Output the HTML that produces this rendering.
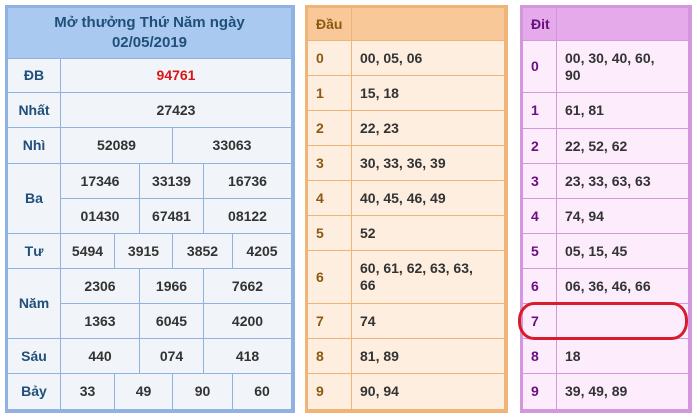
<!DOCTYPE html><html><head><meta charset="utf-8"><style>
body{margin:0;width:698px;height:419px;background:#fff;position:relative;overflow:hidden;font-family:"Liberation Sans",Arial,sans-serif;font-weight:bold;font-size:14px;color:#333}
.c{position:absolute;box-sizing:border-box;display:flex;align-items:center;justify-content:center;text-align:center;line-height:17px}
.b{border-right:1px solid #8fb2e2;border-bottom:1px solid #8fb2e2;background:#f1f4f9}
.bl{color:#1f4f7a}
.o{border-right:1px solid #f0b478;border-bottom:1px solid #f0b478;background:#fdeee0;justify-content:flex-start;padding-left:8px;text-align:left}
.ol{color:#8a5a10}
.p{border-right:1px solid #d496dc;border-bottom:1px solid #d496dc;background:#fcecfc;justify-content:flex-start;padding-left:8px;text-align:left}
.pl{color:#6a1080}
.frame{position:absolute;box-sizing:border-box}
</style></head><body>
<div class="frame" style="left:5px;top:5px;width:290px;height:408px;border:3px solid #8fb2e2"></div>
<div class="c b bl" style="left:8px;top:8px;width:284px;height:51px;background:#aac9f0;color:#1f4f7a;font-size:15px;line-height:20px">Mở thưởng Thứ Năm ngày<br>02/05/2019</div>
<div class="c b bl" style="left:8px;top:59px;width:53px;height:34px">ĐB</div>
<div class="c b" style="left:61px;top:59px;width:231px;height:34px;color:#d81818">94761</div>
<div class="c b bl" style="left:8px;top:93px;width:53px;height:35px">Nhất</div>
<div class="c b" style="left:61px;top:93px;width:231px;height:35px">27423</div>
<div class="c b bl" style="left:8px;top:128px;width:53px;height:36px">Nhì</div>
<div class="c b" style="left:61px;top:128px;width:112px;height:36px">52089</div>
<div class="c b" style="left:173px;top:128px;width:119px;height:36px">33063</div>
<div class="c b bl" style="left:8px;top:164px;width:53px;height:70px">Ba</div>
<div class="c b" style="left:61px;top:164px;width:79px;height:35px">17346</div>
<div class="c b" style="left:140px;top:164px;width:64px;height:35px">33139</div>
<div class="c b" style="left:204px;top:164px;width:88px;height:35px">16736</div>
<div class="c b" style="left:61px;top:199px;width:79px;height:35px">01430</div>
<div class="c b" style="left:140px;top:199px;width:64px;height:35px">67481</div>
<div class="c b" style="left:204px;top:199px;width:88px;height:35px">08122</div>
<div class="c b bl" style="left:8px;top:234px;width:53px;height:35px">Tư</div>
<div class="c b" style="left:61px;top:234px;width:54px;height:35px">5494</div>
<div class="c b" style="left:115px;top:234px;width:58px;height:35px">3915</div>
<div class="c b" style="left:173px;top:234px;width:60px;height:35px">3852</div>
<div class="c b" style="left:233px;top:234px;width:59px;height:35px">4205</div>
<div class="c b bl" style="left:8px;top:269px;width:53px;height:70px">Năm</div>
<div class="c b" style="left:61px;top:269px;width:79px;height:35px">2306</div>
<div class="c b" style="left:140px;top:269px;width:64px;height:35px">1966</div>
<div class="c b" style="left:204px;top:269px;width:88px;height:35px">7662</div>
<div class="c b" style="left:61px;top:304px;width:79px;height:35px">1363</div>
<div class="c b" style="left:140px;top:304px;width:64px;height:35px">6045</div>
<div class="c b" style="left:204px;top:304px;width:88px;height:35px">4200</div>
<div class="c b bl" style="left:8px;top:339px;width:53px;height:35px">Sáu</div>
<div class="c b" style="left:61px;top:339px;width:79px;height:35px">440</div>
<div class="c b" style="left:140px;top:339px;width:64px;height:35px">074</div>
<div class="c b" style="left:204px;top:339px;width:88px;height:35px">418</div>
<div class="c b bl" style="left:8px;top:374px;width:53px;height:36px">Bảy</div>
<div class="c b" style="left:61px;top:374px;width:54px;height:36px">33</div>
<div class="c b" style="left:115px;top:374px;width:58px;height:36px">49</div>
<div class="c b" style="left:173px;top:374px;width:60px;height:36px">90</div>
<div class="c b" style="left:233px;top:374px;width:59px;height:36px">60</div>

<div class="frame" style="left:305px;top:5px;width:203px;height:408px;border:3px solid #f0b478"></div>
<div class="c o ol" style="left:308px;top:8px;width:44px;height:33px;background:#f9c898">Đầu</div>
<div class="c o" style="left:352px;top:8px;width:153px;height:33px;background:#f9c898"></div>
<div class="c o ol" style="left:308px;top:41px;width:44px;height:35px">0</div><div class="c o" style="left:352px;top:41px;width:153px;height:35px">00, 05, 06</div>
<div class="c o ol" style="left:308px;top:76px;width:44px;height:35px">1</div><div class="c o" style="left:352px;top:76px;width:153px;height:35px">15, 18</div>
<div class="c o ol" style="left:308px;top:111px;width:44px;height:35px">2</div><div class="c o" style="left:352px;top:111px;width:153px;height:35px">22, 23</div>
<div class="c o ol" style="left:308px;top:146px;width:44px;height:35px">3</div><div class="c o" style="left:352px;top:146px;width:153px;height:35px">30, 33, 36, 39</div>
<div class="c o ol" style="left:308px;top:181px;width:44px;height:35px">4</div><div class="c o" style="left:352px;top:181px;width:153px;height:35px">40, 45, 46, 49</div>
<div class="c o ol" style="left:308px;top:216px;width:44px;height:35px">5</div><div class="c o" style="left:352px;top:216px;width:153px;height:35px">52</div>
<div class="c o ol" style="left:308px;top:251px;width:44px;height:53px">6</div><div class="c o" style="left:352px;top:251px;width:153px;height:53px">60, 61, 62, 63, 63,<br>66</div>
<div class="c o ol" style="left:308px;top:304px;width:44px;height:35px">7</div><div class="c o" style="left:352px;top:304px;width:153px;height:35px">74</div>
<div class="c o ol" style="left:308px;top:339px;width:44px;height:35px">8</div><div class="c o" style="left:352px;top:339px;width:153px;height:35px">81, 89</div>
<div class="c o ol" style="left:308px;top:374px;width:44px;height:36px">9</div><div class="c o" style="left:352px;top:374px;width:153px;height:36px">90, 94</div>

<div class="frame" style="left:520px;top:5px;width:172px;height:408px;border:3px solid #d496dc"></div>
<div class="c p pl" style="left:523px;top:8px;width:34px;height:33px;background:#e4aaea">Đit</div>
<div class="c p" style="left:557px;top:8px;width:132px;height:33px;background:#e4aaea"></div>
<div class="c p pl" style="left:523px;top:41px;width:34px;height:52px">0</div><div class="c p" style="left:557px;top:41px;width:132px;height:52px">00, 30, 40, 60,<br>90</div>
<div class="c p pl" style="left:523px;top:93px;width:34px;height:36px">1</div><div class="c p" style="left:557px;top:93px;width:132px;height:36px">61, 81</div>
<div class="c p pl" style="left:523px;top:129px;width:34px;height:35px">2</div><div class="c p" style="left:557px;top:129px;width:132px;height:35px">22, 52, 62</div>
<div class="c p pl" style="left:523px;top:164px;width:34px;height:35px">3</div><div class="c p" style="left:557px;top:164px;width:132px;height:35px">23, 33, 63, 63</div>
<div class="c p pl" style="left:523px;top:199px;width:34px;height:35px">4</div><div class="c p" style="left:557px;top:199px;width:132px;height:35px">74, 94</div>
<div class="c p pl" style="left:523px;top:234px;width:34px;height:35px">5</div><div class="c p" style="left:557px;top:234px;width:132px;height:35px">05, 15, 45</div>
<div class="c p pl" style="left:523px;top:269px;width:34px;height:35px">6</div><div class="c p" style="left:557px;top:269px;width:132px;height:35px">06, 36, 46, 66</div>
<div class="c p pl" style="left:523px;top:304px;width:34px;height:35px">7</div><div class="c p" style="left:557px;top:304px;width:132px;height:35px"></div>
<div class="c p pl" style="left:523px;top:339px;width:34px;height:35px">8</div><div class="c p" style="left:557px;top:339px;width:132px;height:35px">18</div>
<div class="c p pl" style="left:523px;top:374px;width:34px;height:36px">9</div><div class="c p" style="left:557px;top:374px;width:132px;height:36px">39, 49, 89</div>
<div style="position:absolute;left:518px;top:302px;width:170px;height:38px;border:3px solid #d81c2c;border-radius:16px/18px;box-sizing:border-box"></div>
</body></html>
